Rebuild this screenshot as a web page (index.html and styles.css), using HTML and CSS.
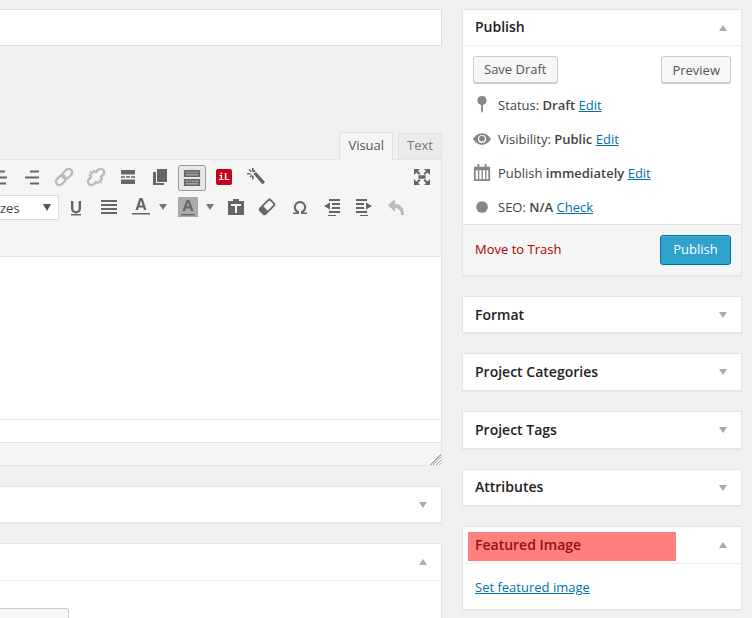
FILE: index.html
```html
<!DOCTYPE html>
<html lang="en">
<head>
  <meta charset="UTF-8" />
  <meta name="viewport" content="width=device-width, initial-scale=1" />
  <title>Edit Project</title>
  <link rel="stylesheet" href="styles.css">
</head>
<body>
  <div class="page">

    <div class="main-col">
      <div class="title-box"></div>

      <div class="tabs">
        <span class="tab tab-active">Visual</span>
        <span class="tab">Text</span>
      </div>

      <div class="editor">
        <div class="toolbar">
          <div class="tool-row row-one">
            <span class="tool"><svg viewBox="0 0 20 20"><path d="M5 3.500h10v2H5zM3 9.500h14v2H3zM4 15.500h12v2H4z"/></svg></span>
            <span class="tool"><svg viewBox="0 0 20 20"><path d="M8 3.500h9v2H8zM3 9.500h14v2H3zM8 15.500h9v2H8z"/></svg></span>
            <span class="tool muted"><svg viewBox="0 0 20 20"><g transform="rotate(-45 10 10)" fill="none" stroke-width="2.400"><rect x="0" y="6.500" width="11" height="7" rx="3.500"/><rect x="9" y="6.500" width="11" height="7" rx="3.500"/></g></svg></span>
            <span class="tool muted"><svg viewBox="0 0 20 20"><g transform="rotate(-45 10 10)" fill="none" stroke-width="2.400"><path d="M7.500 6.500H3.500a3.500 3.500 0 0 0 0 7h4M12.500 6.500h4a3.500 3.500 0 0 1 0 7h-4M10 2v3.500M10 14.500V18M6.500 3.500L8 6M13.500 3.500L12 6M6.500 16.500L8 14M13.500 16.500L12 14"/></g></svg></span>
            <span class="tool"><svg viewBox="0 0 20 20"><path d="M3 3h14v4.500H3zM3 12.500h14V17H3zM3 9.200h4v1.500H3zM8 9.200h4v1.500H8zM13 9.200h4v1.500h-4z"/></svg></span>
            <span class="tool"><svg viewBox="0 0 20 20"><path d="M7 2h10v13H7z"/><path d="M3 5h3v11h8v2H3z"/></svg></span>
            <span class="tool"><span class="kitchen-btn"><svg viewBox="0 0 20 20"><path d="M1 1h18v8H1zM1 11h18v8H1z"/><path class="holes" d="M3 3h2v1H3zM6 3h2v1H6zM9 3h2v1H9zM12 3h2v1h-2zM15 3h2v1h-2zM3 6h14v1H3zM3 13h3v1H3zM7 13h2v1H7zM10 13h2v1h-2zM13 13h4v1h-4zM3 16h14v1H3z"/></svg></span></span>
            <span class="tool"><span class="il-btn">iL</span></span>
            <span class="tool"><svg viewBox="0 0 20 20"><path d="M7.500 7L10 5l9 10-2.500 2.500z"/><path d="M6 1h1.600v3.500H6zM6 9h1.600v3.500H6zM1 6h3.500v1.600H1zM9 6h1v1.600H9zM2.500 3l1.100-1.100 2.300 2.300-1.100 1.100zM8.500 2.800l1.100 1.100-1.800 1.800-1.100-1.100zM3.500 9.500l2-2 1.100 1.100-2 2z"/></svg></span>
            <span class="tool tool-full"><svg viewBox="0 0 20 20"><path d="M2 2h6L6 4l2.500 2.500L7 8 4.500 5.500 2 8zM18 2v6l-2.500-2.500L13 8l-1.500-1.500L14 4l-2-2zM2 18v-6l2.500 2.500L7 12l1.500 1.500L6 16l2 2zM18 18h-6l2-2-2.500-2.500L13 12l2.500 2.500L18 12zM6.500 8.200h7v3.600h-7z"/></svg></span>
          </div>
          <div class="tool-row row-two">
            <div class="size-select"><span>zes</span><i class="caret-down dark"></i></div>
            <span class="tool"><svg viewBox="0 0 20 20"><path d="M5 4h2.400v7.500a2.600 2.600 0 0 0 5.200 0V4H15v7.500a5 5 0 0 1-10 0z"/><path d="M5 17h10v1.500H5z"/></svg></span>
            <span class="tool tool-just"><svg viewBox="0 0 20 20"><path d="M2 3h16v2H2zM2 7h16v2H2zM2 11h16v2H2zM2 15h16v2H2z"/></svg></span>
            <span class="tool"><svg viewBox="0 0 20 20"><path d="M8.500 1h3l4 12H13l-.8-2.500H7.800L7 13H4.500zM8.500 8.500h3L10 3.500z" fill-rule="evenodd"/><path d="M1 16h18v1.500H1z"/></svg></span>
            <i class="caret-down small"></i>
            <span class="tool"><span class="bg-color"><svg viewBox="0 0 20 20"><path d="M8.500 3h3l4 11H13l-.8-2.500H7.800L7 14H4.500zM8.500 9.500h3L10 5z" fill-rule="evenodd"/><path d="M3 17h14v1.500H3z"/></svg></span></span>
            <i class="caret-down small"></i>
            <span class="tool"><svg viewBox="0 0 20 20"><path fill-rule="evenodd" d="M2 4h5V2h6v2h5v14H2zM5 7v2h4v7h2V9h4V7z"/></svg></span>
            <span class="tool tool-eraser"><svg viewBox="0 0 20 20"><g transform="rotate(-45 10 10)"><rect x="2.500" y="6" width="15" height="8" rx="2" fill="none" stroke-width="1.800" class="line"/><path d="M3 6.500h5v7H3z"/></g></svg></span>
            <span class="tool"><svg viewBox="0 0 20 20"><path d="M3 15.500h3.600a6.200 6.200 0 1 1 6.800 0H17V17h-6v-2.800a4.200 4.200 0 1 0-2 0V17H3z"/></svg></span>
            <span class="tool"><svg viewBox="0 0 20 20"><path d="M7 2h11v2H7zM10 6h8v2h-8zM10 10h8v2h-8zM7 14h11v2H7zM6 18h8v1H6zM8 5.500v7L2 9z"/></svg></span>
            <span class="tool"><svg viewBox="0 0 20 20"><path d="M2 2h11v2H2zM2 6h8v2H2zM2 10h8v2H2zM2 14h11v2H2zM6 18h8v1H6zM12 5.500v7L18 9z"/></svg></span>
            <span class="tool undo"><svg viewBox="0 0 20 20"><path d="M9 2v5c5 0 9 3 9 11h-3c0-4-2-7-6-7v4L2 8z"/></svg></span>
          </div>
        </div>
        <div class="edit-area"></div>
        <div class="path-line"></div>
        <div class="status-bar"><span class="resize-grip"></span></div>
      </div>

      <div class="box">
        <div class="box-head no-line"><i class="caret-down"></i></div>
      </div>

      <div class="box">
        <div class="box-head open-head"><i class="caret-up"></i></div>
        <div class="box-body"><span class="small-button"></span></div>
      </div>
    </div>

    <div class="side-col">
      <div class="box">
        <div class="box-head"><h2>Publish</h2><i class="caret-up"></i></div>
        <div class="draft-actions">
          <span class="btn">Save Draft</span>
          <span class="btn btn-preview">Preview</span>
        </div>
        <div class="misc-row">
          <svg class="misc-ico" viewBox="0 0 20 20"><path d="M10 0a5 5 0 0 1 1 9.900V17l-1 2-1-2V9.900A5 5 0 0 1 10 0z"/></svg>
          <span>Status: <b>Draft</b> <a href="#">Edit</a></span>
        </div>
        <div class="misc-row">
          <svg class="misc-ico" viewBox="0 0 20 20"><path fill-rule="evenodd" d="M10 3.500c4.500 0 8 3.200 10 6.500-2 3.300-5.500 6.500-10 6.500S2 13.300 0 10c2-3.300 5.500-6.500 10-6.500zm0 2a4.500 4.500 0 1 0 0 9 4.500 4.500 0 0 0 0-9z"/><circle cx="10" cy="9.500" r="3.200"/></svg>
          <span>Visibility: <b>Public</b> <a href="#">Edit</a></span>
        </div>
        <div class="misc-row">
          <svg class="misc-ico" viewBox="0 0 20 20"><path fill-rule="evenodd" d="M5 0h2v3h6V0h2v3h4v16H1V3h4zM3 7v10h2.500V7zM7 7v10h2.500V7zM11 7v10h2.500V7zM15 7v10h2V7z"/></svg>
          <span>Publish <b>immediately</b> <a href="#">Edit</a></span>
        </div>
        <div class="misc-row">
          <svg class="misc-ico" viewBox="0 0 20 20"><circle cx="10" cy="10" r="6.500"/></svg>
          <span>SEO: <b>N/A</b> <a href="#">Check</a></span>
        </div>
        <div class="major-actions">
          <a href="#" class="trash">Move to Trash</a>
          <span class="btn-primary">Publish</span>
        </div>
      </div>

      <div class="box"><div class="box-head no-line format-head"><h2>Format</h2><i class="caret-down"></i></div></div>
      <div class="box"><div class="box-head no-line tall"><h2>Project Categories</h2><i class="caret-down"></i></div></div>
      <div class="box"><div class="box-head no-line tall"><h2>Project Tags</h2><i class="caret-down"></i></div></div>
      <div class="box"><div class="box-head no-line"><h2>Attributes</h2><i class="caret-down"></i></div></div>

      <div class="box featured">
        <div class="box-head"><h2>Featured Image</h2><i class="caret-up"></i></div>
        <div class="featured-body"><a href="#">Set featured image</a></div>
        <span class="highlight"></span>
      </div>
    </div>

  </div>
</body>
</html>
```

FILE: styles.css
```css
* {
  box-sizing: border-box;
}

html, body {
  margin: 0;
  height: 618px;
  overflow: hidden;
}

body {
  background: #f1f1f1;
  color: #444;
  font-family: "Open Sans", sans-serif;
  font-size: 13px;
}

a {
  color: #0073aa;
}

h2 {
  margin: 0 0 2px;
  font-size: 14px;
  font-weight: 600;
  color: #222;
}

.page {
  display: flex;
  align-items: flex-start;
  gap: 20px;
  padding-top: 9px;
}

.main-col {
  width: 442px;
  flex-shrink: 0;
}

.side-col {
  width: 280px;
  flex-shrink: 0;
}

.title-box {
  height: 37px;
  background: #fff;
  border: 1px solid #ddd;
  border-left: none;
  margin-bottom: 86px;
}

/* tabs */
.tabs {
  display: flex;
  justify-content: flex-end;
  align-items: flex-end;
  gap: 5px;
  height: 27px;
}

.tab {
  height: 26px;
  padding: 0 8px;
  line-height: 23px;
  color: #777;
  background: #ebebeb;
  border: 1px solid #e2e2e2;
  border-bottom: none;
}

.tab-active {
  height: 28px;
  margin-bottom: -1px;
  line-height: 25px;
  color: #555;
  background: #f5f5f5;
  position: relative;
}

/* editor */
.editor {
  border: 1px solid #e5e5e5;
  border-left: none;
  background: #f5f5f5;
  margin-bottom: 20px;
}

.toolbar {
  height: 97px;
  padding-top: 2px;
  border-bottom: 1px solid #e5e5e5;
}

.tool-row {
  display: flex;
  align-items: center;
  height: 30px;
}

.row-one {
  margin-left: -16px;
}

.tool {
  display: flex;
  align-items: center;
  justify-content: center;
  width: 32px;
  height: 30px;
  flex-shrink: 0;
}

.tool svg {
  width: 20px;
  height: 20px;
  fill: #666;
  display: block;
}

.muted svg {
  stroke: #bbb;
}

.undo svg {
  fill: #bbb;
}

.tool-full {
  margin-left: auto;
  margin-right: 3px;
}

.tool-just {
  margin-left: 1px;
}

.tool-eraser {
  margin-right: 1px;
  margin-left: -1px;
}

.line {
  stroke: #666;
}

.kitchen-btn {
  display: flex;
  align-items: center;
  justify-content: center;
  width: 28px;
  height: 26px;
  margin-top: 2px;
  background: #e8e8e8;
  border: 1px solid #999;
  border-radius: 2px;
}

.kitchen-btn svg {
  width: 18px;
  height: 18px;
}

.holes {
  fill: #e2ecdf;
}

.il-btn {
  width: 16px;
  height: 16px;
  line-height: 16px;
  background: #c8001a;
  border-radius: 2px;
  color: #fff;
  font-family: "DejaVu Sans Mono", monospace;
  font-size: 9px;
  font-weight: 700;
  text-align: center;
}

.size-select {
  display: flex;
  align-items: center;
  justify-content: space-between;
  width: 59px;
  height: 25px;
  margin: 1px 1px 0 0;
  padding: 0 7px 0 0;
  border: 1px solid #ddd;
  border-left: none;
  background: #fff;
  flex-shrink: 0;
  color: #444;
}

.row-two > .caret-down {
  margin-left: 2px;
  margin-right: 1px;
}

.row-two > .tool + .caret-down + .tool {
  margin-left: 4px;
}

.row-two > .caret-down + .tool + .caret-down + .tool {
  margin-left: 5px;
}

.bg-color {
  width: 20px;
  height: 20px;
  background: #aaa;
}

.edit-area {
  height: 163px;
  background: #fff;
  border-bottom: 1px solid #e5e5e5;
}

.path-line {
  height: 23px;
  background: #fff;
  border-bottom: 1px solid #e5e5e5;
}

.status-bar {
  position: relative;
  height: 22px;
}

.resize-grip {
  position: absolute;
  right: 0;
  bottom: 0;
  width: 12px;
  height: 12px;
  background: repeating-linear-gradient(135deg, transparent 0 1px, #aaa 1px 2px);
  clip-path: polygon(100% 0, 100% 100%, 0 100%);
}

/* boxes */
.box {
  position: relative;
  background: #fff;
  border: 1px solid #e5e5e5;
  box-shadow: 0 1px 1px rgba(0, 0, 0, .04);
  margin-bottom: 20px;
}

.main-col .box {
  border-left: none;
}

.box-head {
  height: 36px;
  padding: 0 14px 0 12px;
  display: flex;
  align-items: center;
  border-bottom: 1px solid #eee;
}

.no-line {
  height: 35px;
  border-bottom: none;
}

.tall {
  height: 36px;
}

.format-head h2 {
  margin-bottom: 0;
}

.open-head,
.featured .box-head {
  height: 37px;
}

.caret-up,
.caret-down {
  display: block;
  flex-shrink: 0;
  width: 0;
  height: 0;
  border-left: 4.500px solid transparent;
  border-right: 4.500px solid transparent;
}

.box-head i {
  margin-left: auto;
}

.caret-up { border-bottom: 6px solid #aaa; }
.caret-down { border-top: 6px solid #aaa; }
.caret-down.dark { border-top-color: #555; border-top-width: 7px; }
.caret-down.small { border-top-color: #777; }

.box-body {
  height: 60px;
  padding-top: 27px;
}

.small-button {
  display: block;
  width: 69px;
  height: 30px;
  background: #f7f7f7;
  border: 1px solid #ccc;
  border-left: none;
  border-radius: 0 3px 3px 0;
}

/* publish box */
.draft-actions {
  display: flex;
  justify-content: space-between;
  align-items: flex-start;
  padding: 10px 10px 0;
  height: 42px;
}

.btn {
  height: 27px;
  line-height: 25px;
  padding: 0 10px;
  background: #f7f7f7;
  border: 1px solid #ccc;
  border-radius: 3px;
  color: #555;
  box-shadow: 0 1px 0 #ccc;
}

.btn-preview {
  line-height: 27px;
}

.misc-row {
  display: flex;
  align-items: center;
  height: 34px;
  padding-left: 10px;
  gap: 7px;
}

.misc-row b {
  font-weight: 600;
}

.misc-ico {
  width: 18px;
  height: 18px;
  fill: #82878c;
  flex-shrink: 0;
}

.major-actions {
  display: flex;
  justify-content: space-between;
  align-items: center;
  height: 51px;
  padding: 0 10px 0 12px;
  background: #f5f5f5;
  border-top: 1px solid #ddd;
}

.trash {
  margin-bottom: 2px;
  color: #a00;
  text-decoration: none;
}

.btn-primary {
  width: 71px;
  height: 30px;
  line-height: 27px;
  text-align: center;
  background: #2ea2cc;
  border: 1px solid #0074a2;
  border-radius: 3px;
  color: #fff;
  box-shadow: inset 0 1px 0 rgba(120, 200, 230, .5);
}

/* featured */
.featured-body {
  height: 45px;
  padding: 0 12px;
  display: flex;
  align-items: center;
}

.highlight {
  position: absolute;
  left: 5px;
  top: 5px;
  width: 208px;
  height: 29px;
  background: rgba(255, 0, 0, .5);
}
```
